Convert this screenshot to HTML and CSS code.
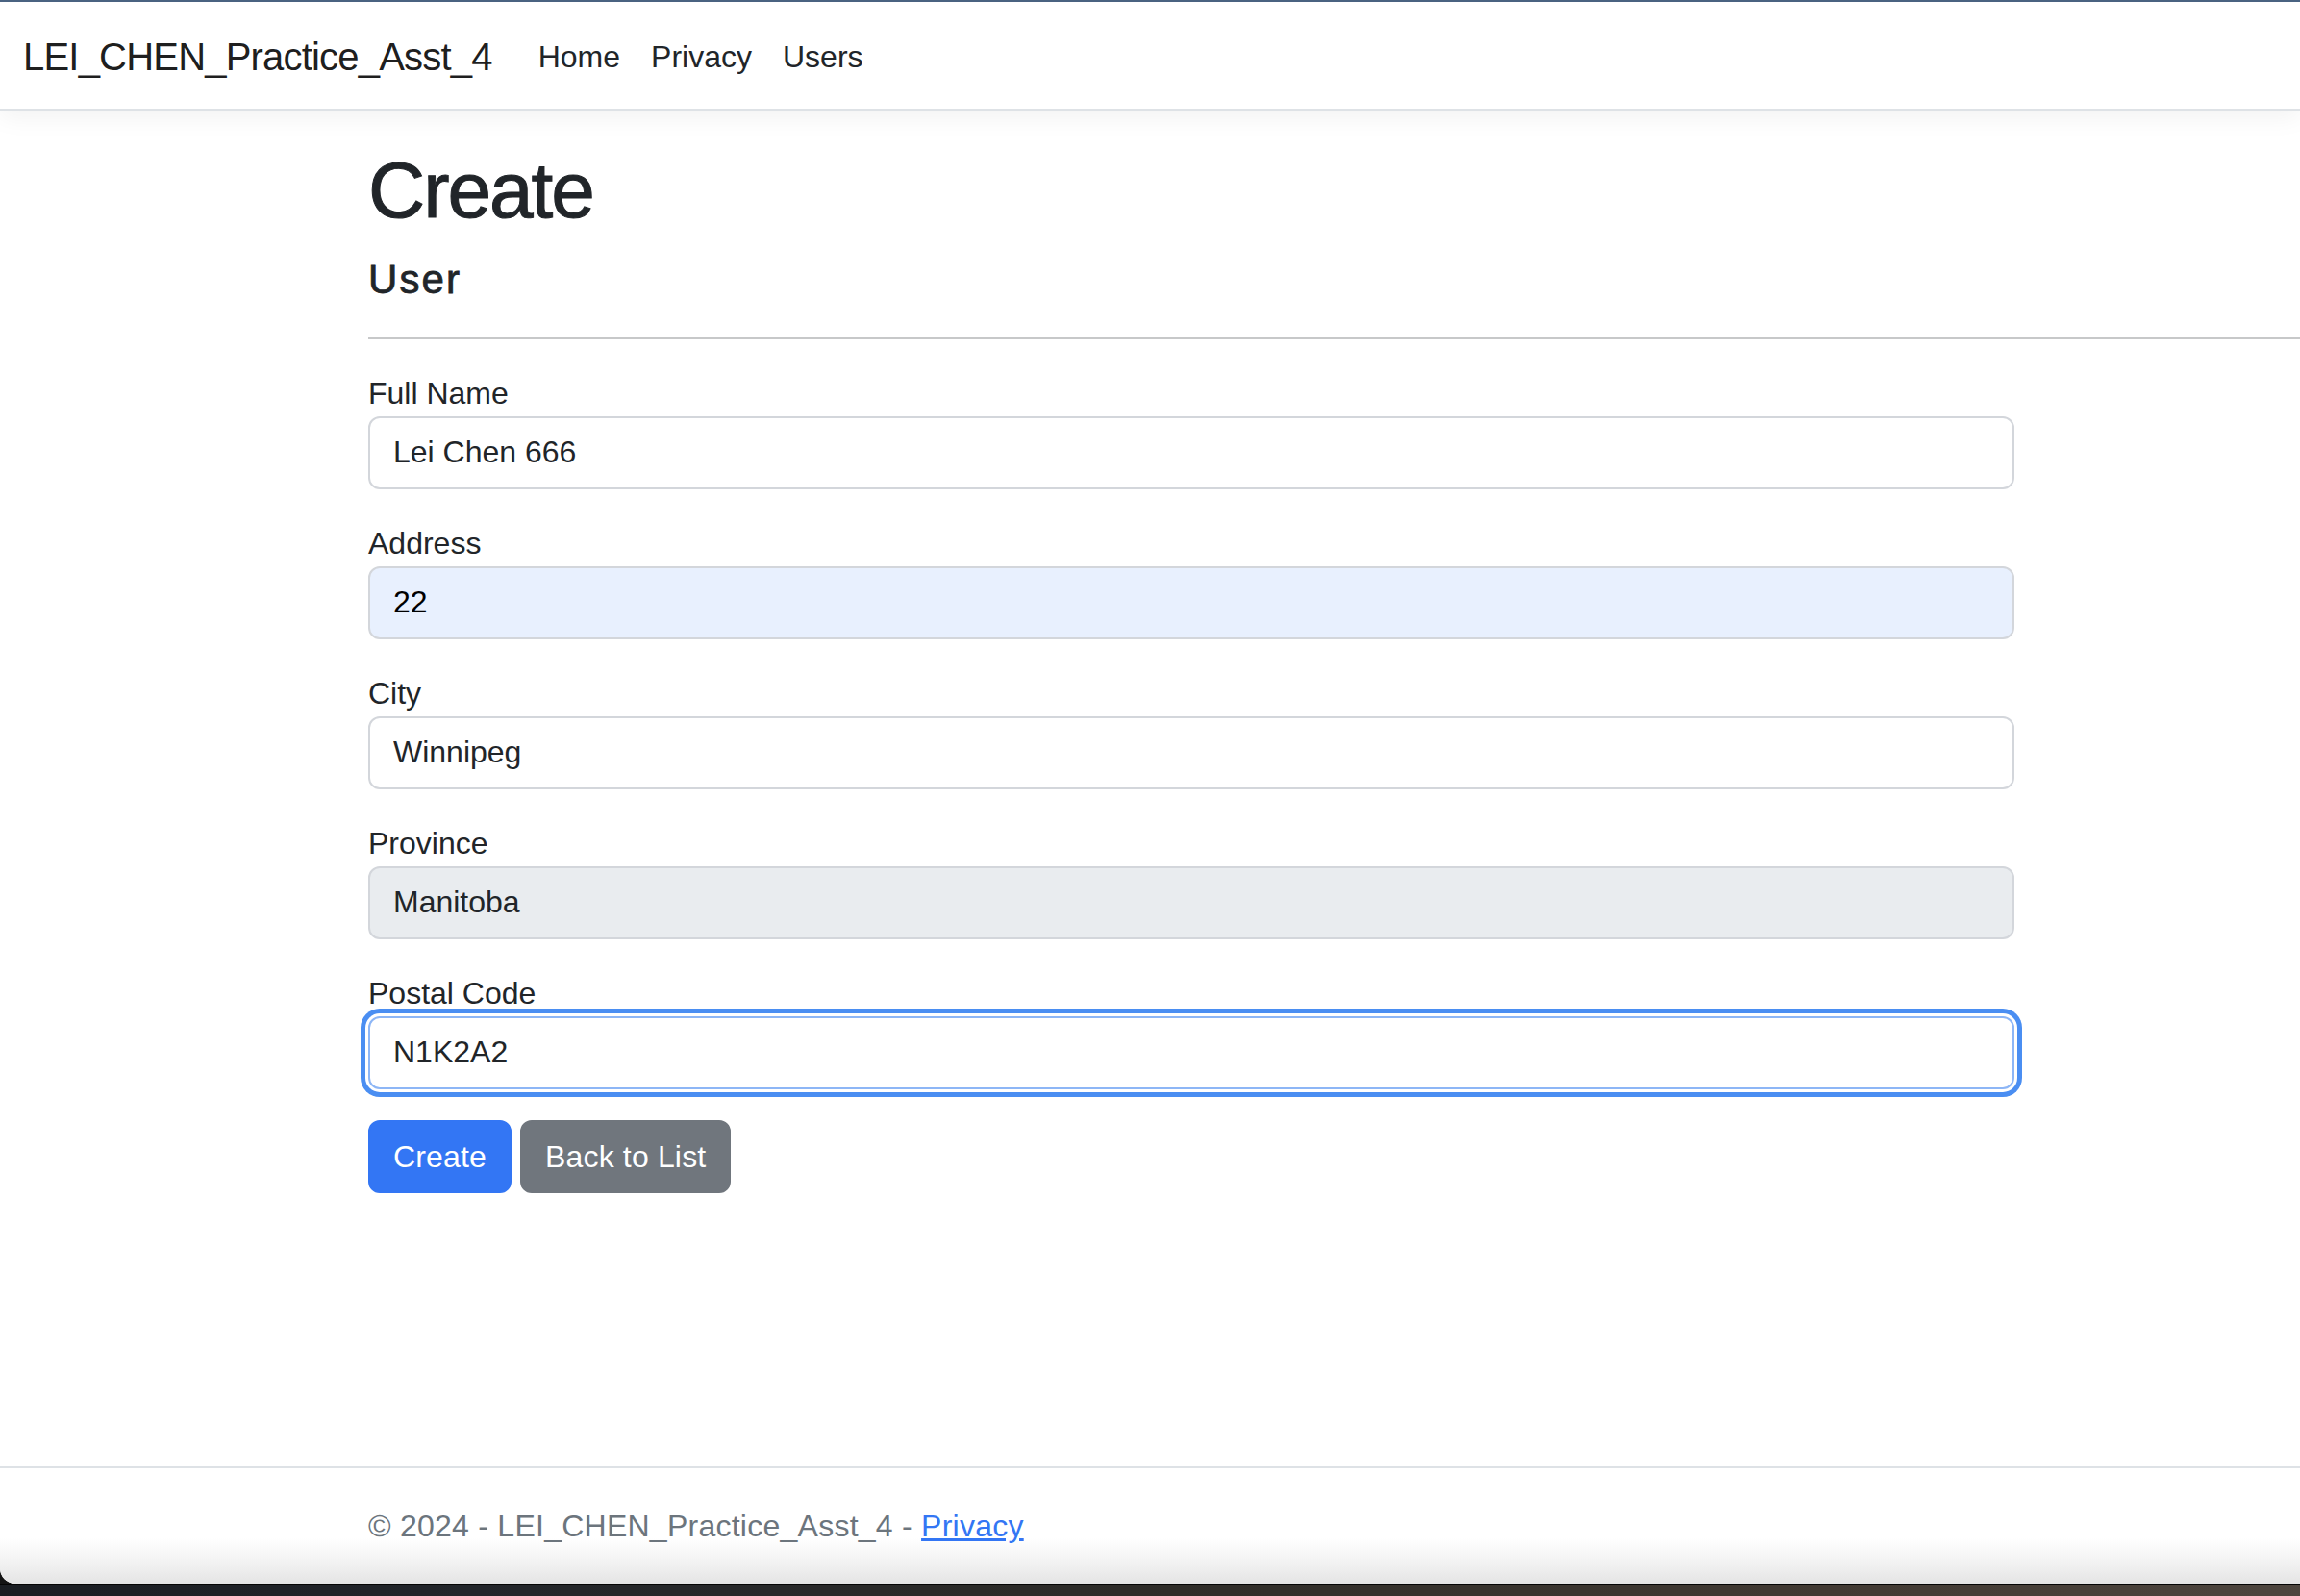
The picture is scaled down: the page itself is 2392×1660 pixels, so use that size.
FILE: index.html
```html
<!DOCTYPE html>
<html lang="en">
<head>
<meta charset="utf-8">
<title>Create - LEI_CHEN_Practice_Asst_4</title>
<link rel="stylesheet" href="styles.css">
</head>
<body>
<div class="window">
  <div class="topline"></div>
  <header class="navbar">
    <a class="brand" href="#">LEI_CHEN_Practice_Asst_4</a>
    <nav class="nav">
      <a class="nav-link" href="#">Home</a>
      <a class="nav-link" href="#">Privacy</a>
      <a class="nav-link" href="#">Users</a>
    </nav>
  </header>
  <main class="content">
    <h1 class="title">Create</h1>
    <h4 class="subtitle">User</h4>
    <hr class="rule">
    <form class="form">
      <div class="group">
        <label class="label">Full Name</label>
        <input class="control" type="text" value="Lei Chen 666">
      </div>
      <div class="group">
        <label class="label">Address</label>
        <input class="control autofill" type="text" value="22">
      </div>
      <div class="group">
        <label class="label">City</label>
        <input class="control" type="text" value="Winnipeg">
      </div>
      <div class="group">
        <label class="label">Province</label>
        <input class="control readonly" type="text" value="Manitoba" readonly>
      </div>
      <div class="group">
        <label class="label">Postal Code</label>
        <input class="control focused" type="text" value="N1K2A2">
      </div>
      <div class="actions">
        <button class="btn btn-primary" type="button">Create</button>
        <a class="btn btn-secondary" href="#">Back to List</a>
      </div>
    </form>
  </main>
  <footer class="footer">
    <div class="footer-text">© 2024 - LEI_CHEN_Practice_Asst_4 - <a class="footer-link" href="#">Privacy</a></div>
  </footer>
</div>
<div class="desk"></div>
</body>
</html>
```

FILE: styles.css
```css
* {
  box-sizing: border-box;
}

html, body {
  margin: 0;
  padding: 0;
}

body {
  width: 2392px;
  height: 1660px;
  overflow: hidden;
  background: #141414;
  font-family: "Liberation Sans", Arial, sans-serif;
  font-size: 32px;
  line-height: 48px;
  color: #212529;
  display: flex;
  flex-direction: column;
}

.window {
  height: 1647px;
  background: #ffffff;
  display: flex;
  flex-direction: column;
  overflow: hidden;
  border-bottom-left-radius: 16px;
}

.topline {
  height: 2px;
  background: #4b6483;
  flex: none;
}

.navbar {
  flex: none;
  height: 113px;
  padding: 3px 24px 0 24px;
  display: flex;
  align-items: center;
  background: #ffffff;
  border-bottom: 2px solid #dee2e6;
  box-shadow: 0 8px 24px rgba(0, 0, 0, 0.05);
  position: relative;
  z-index: 1;
}

.brand {
  font-size: 40px;
  line-height: 60px;
  padding: 10px 0;
  margin-right: 32px;
  letter-spacing: -0.02em;
  color: rgba(0, 0, 0, 0.9);
  text-decoration: none;
  white-space: nowrap;
}

.nav {
  display: flex;
}

.nav-link {
  display: block;
  padding: 16px 16px;
  font-size: 32px;
  line-height: 48px;
  color: #212529;
  text-decoration: none;
}

.content {
  flex: 1;
  padding: 34px 0 0 383px;
}

.title {
  margin: 0 0 19px;
  font-size: 82px;
  line-height: 1.2;
  font-weight: 500;
  letter-spacing: -0.025em;
  -webkit-text-stroke: 1px #212529;
  color: #212529;
}

.subtitle {
  margin: 0;
  font-size: 42px;
  line-height: 1.2;
  font-weight: 500;
  letter-spacing: 0.05em;
  -webkit-text-stroke: 0.8px #212529;
  color: #212529;
}

.rule {
  margin: 34px 0 32px;
  border: 0;
  border-top: 2px solid #c7c8c9;
  height: 0;
}

.form {
  width: 1712px;
}

.group {
  margin-bottom: 32px;
}

.label {
  display: block;
  font-size: 32px;
  line-height: 48px;
  color: #212529;
}

.control {
  display: block;
  width: 100%;
  height: 76px;
  padding: 12px 24px;
  font-family: "Liberation Sans", Arial, sans-serif;
  font-size: 32px;
  line-height: 48px;
  color: #212529;
  background: #ffffff;
  border: 2px solid #d3d6db;
  border-radius: 12px;
  outline: none;
  margin: 0;
}

.autofill {
  background: #e8f0fe;
  color: #000000;
}

.readonly {
  background: #e9ecef;
}

.focused {
  border-color: #8db6f6;
  box-shadow: 0 0 0 3px #ffffff, 0 0 0 8px #4a8ef2;
}

.actions {
  display: flex;
  gap: 9px;
}

.btn {
  display: inline-block;
  height: 76px;
  padding: 12px 24px;
  font-family: "Liberation Sans", Arial, sans-serif;
  font-size: 32px;
  line-height: 48px;
  letter-spacing: 0.005em;
  color: #ffffff;
  border: 2px solid transparent;
  border-radius: 12px;
  text-decoration: none;
  cursor: pointer;
}

.btn-primary {
  background: #3376f4;
  border-color: #3376f4;
}

.btn-secondary {
  background: #70767d;
  border-color: #70767d;
}

.footer {
  flex: none;
  height: 122px;
  border-top: 2px solid #dee2e6;
  background: linear-gradient(to bottom, #ffffff 0, #ffffff 72px, #f1f1f1 100px, #e4e4e4 120px);
  padding-left: 383px;
  line-height: 120px;
  white-space: nowrap;
}

.footer-text {
  font-size: 32px;
  letter-spacing: 0.25px;
  color: #6c757d;
}

.footer-link {
  color: #3376f4;
  text-decoration: underline;
}

.desk {
  flex: 1;
  background: linear-gradient(90deg, #1a1d22 0, #22252a 20%, #2e2c28 50%, #423a33 80%, #4d453e 100%);
  border-top: 2px solid #050505;
}
```
